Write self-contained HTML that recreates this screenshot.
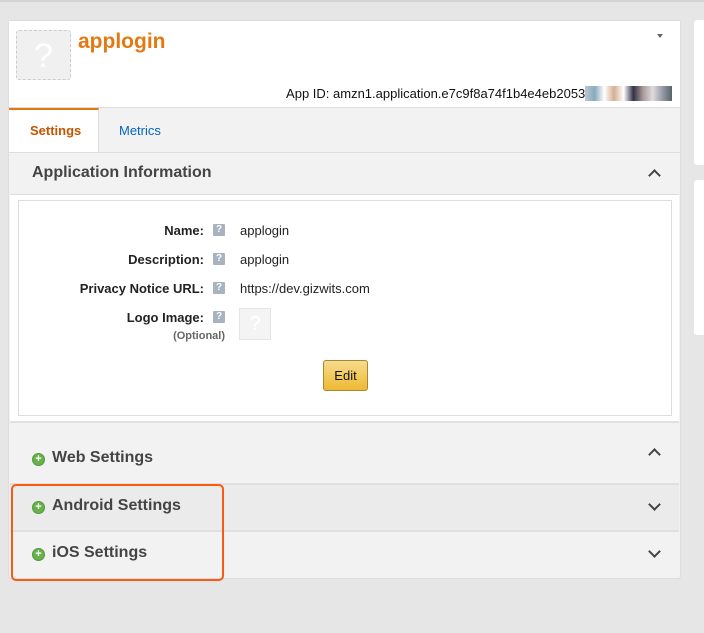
<!DOCTYPE html>
<html><head><style>
*{margin:0;padding:0;box-sizing:border-box}
body{width:704px;height:633px;background:#e6e6e6;font-family:"Liberation Sans",Arial,sans-serif;position:relative;overflow:hidden}
.a{position:absolute}
.q{position:absolute;width:12px;height:12px;background:#a9b3c0;color:#fff;font-size:10px;font-weight:bold;text-align:center;line-height:12px;border-radius:1px}
.lab{position:absolute;right:500px;font-size:13px;font-weight:bold;color:#222;text-align:right;white-space:nowrap}
.val{position:absolute;left:240px;font-size:13px;color:#222}
.plus{position:absolute;width:13px;height:13px;border-radius:50%;background:#6ab04c;border:1px solid #4e9a3a;color:#fff;font-size:11px;line-height:11px;text-align:center;font-weight:bold}
.sec{position:absolute;font-size:16px;font-weight:bold;color:#444}
.chev{position:absolute;width:9px;height:9px;border-right:2px solid #444;border-bottom:2px solid #444}
</style></head><body>
<div class="a" style="left:0;top:0;width:704px;height:2px;background:#d4d4d4"></div>
<div class="a" style="left:694px;top:20px;width:12px;height:145px;background:#fff;border-radius:3px"></div>
<div class="a" style="left:694px;top:180px;width:12px;height:155px;background:#fff;border-radius:3px"></div>
<div class="a" style="left:8px;top:20px;width:673px;height:559px;background:#f2f2f2;border-radius:3px;border:1px solid #ddd"></div>
<div class="a" style="left:9px;top:21px;width:671px;height:87px;background:#fff;border-bottom:1px solid #ddd"></div>
<div class="a" style="left:16px;top:30px;width:55px;height:50px;background:#f0f0f0;border:1px dashed #ccc;border-radius:3px;color:#fff;font-size:34px;text-align:center;line-height:50px">?</div>
<div class="a" style="left:78px;top:30px;font-size:21px;font-weight:bold;color:#e47911">applogin</div>
<div class="a" style="left:657px;top:34px;border:3px solid transparent;border-top:4px solid #666"></div>
<div class="a" style="right:32px;top:86px;font-size:13px;color:#111">App ID: amzn1.application.e7c9f8a74f1b4e4eb2053<span style="background:linear-gradient(90deg,#bcc8d4,#8ab,#fff,#d4b090,#fff,#334,#a99,#ddd,#99a,#566);color:transparent">XXXXXXXXXX</span></div>
<div class="a" style="left:9px;top:108px;width:90px;height:44px;background:#fff;border-top:2px solid #e47911;border-right:1px solid #ddd"></div>
<div class="a" style="left:30px;top:123px;font-size:13px;font-weight:bold;color:#c45500">Settings</div>
<div class="a" style="left:119px;top:123px;font-size:13px;color:#0066c0">Metrics</div>
<div class="a" style="left:9px;top:152px;width:671px;height:1px;background:#ddd"></div>
<div class="a" style="left:10px;top:194px;width:669px;height:1px;background:#ddd"></div>
<div class="a" style="left:32px;top:164px;font-size:16px;font-weight:bold;color:#444">Application Information</div>
<div class="chev" style="left:650px;top:171px;transform:rotate(-135deg)"></div>
<div class="a" style="left:10px;top:195px;width:669px;height:226px;background:#fff"></div>
<div class="a" style="left:18px;top:200px;width:654px;height:216px;border:1px solid #ddd;background:#fff"></div>
<div class="lab" style="top:223px">Name:</div><div class="q" style="left:213px;top:224px">?</div><div class="val" style="top:223px">applogin</div>
<div class="lab" style="top:252px">Description:</div><div class="q" style="left:213px;top:253px">?</div><div class="val" style="top:252px">applogin</div>
<div class="lab" style="top:281px">Privacy Notice URL:</div><div class="q" style="left:213px;top:282px">?</div><div class="val" style="top:281px">https://dev.gizwits.com</div>
<div class="lab" style="top:310px">Logo Image:</div><div class="q" style="left:213px;top:311px">?</div>
<div class="a" style="right:479px;top:330px;font-size:11px;font-weight:bold;color:#666">(Optional)</div>
<div class="a" style="left:239px;top:308px;width:32px;height:32px;background:#f4f4f4;border:1px solid #e4e4e4;color:#fff;font-size:20px;text-align:center;line-height:30px">?</div>
<div class="a" style="left:323px;top:360px;width:45px;height:31px;background:linear-gradient(#f7dc8c,#eeb933);border:1px solid #a88734;border-radius:3px;font-size:13px;color:#111;text-align:center;line-height:29px">Edit</div>
<div class="a" style="left:10px;top:421px;width:669px;height:2px;background:#e0e0e0"></div>
<div class="a" style="left:10px;top:483px;width:669px;height:2px;background:#e0e0e0"></div>
<div class="a" style="left:10px;top:485px;width:669px;height:45px;background:#ebebeb"></div>
<div class="a" style="left:10px;top:530px;width:669px;height:2px;background:#e0e0e0"></div>
<div class="plus" style="left:32px;top:453px">+</div><div class="sec" style="left:52px;top:449px">Web Settings</div>
<div class="chev" style="left:650px;top:450px;transform:rotate(-135deg)"></div>
<div class="plus" style="left:32px;top:501px">+</div><div class="sec" style="left:52px;top:497px">Android Settings</div>
<div class="chev" style="left:650px;top:500px;transform:rotate(45deg)"></div>
<div class="plus" style="left:32px;top:548px">+</div><div class="sec" style="left:52px;top:544px">iOS Settings</div>
<div class="chev" style="left:650px;top:547px;transform:rotate(45deg)"></div>
<div class="a" style="left:11px;top:484px;width:213px;height:97px;border:2px solid #fa5a14;border-radius:5px"></div>
</body></html>
